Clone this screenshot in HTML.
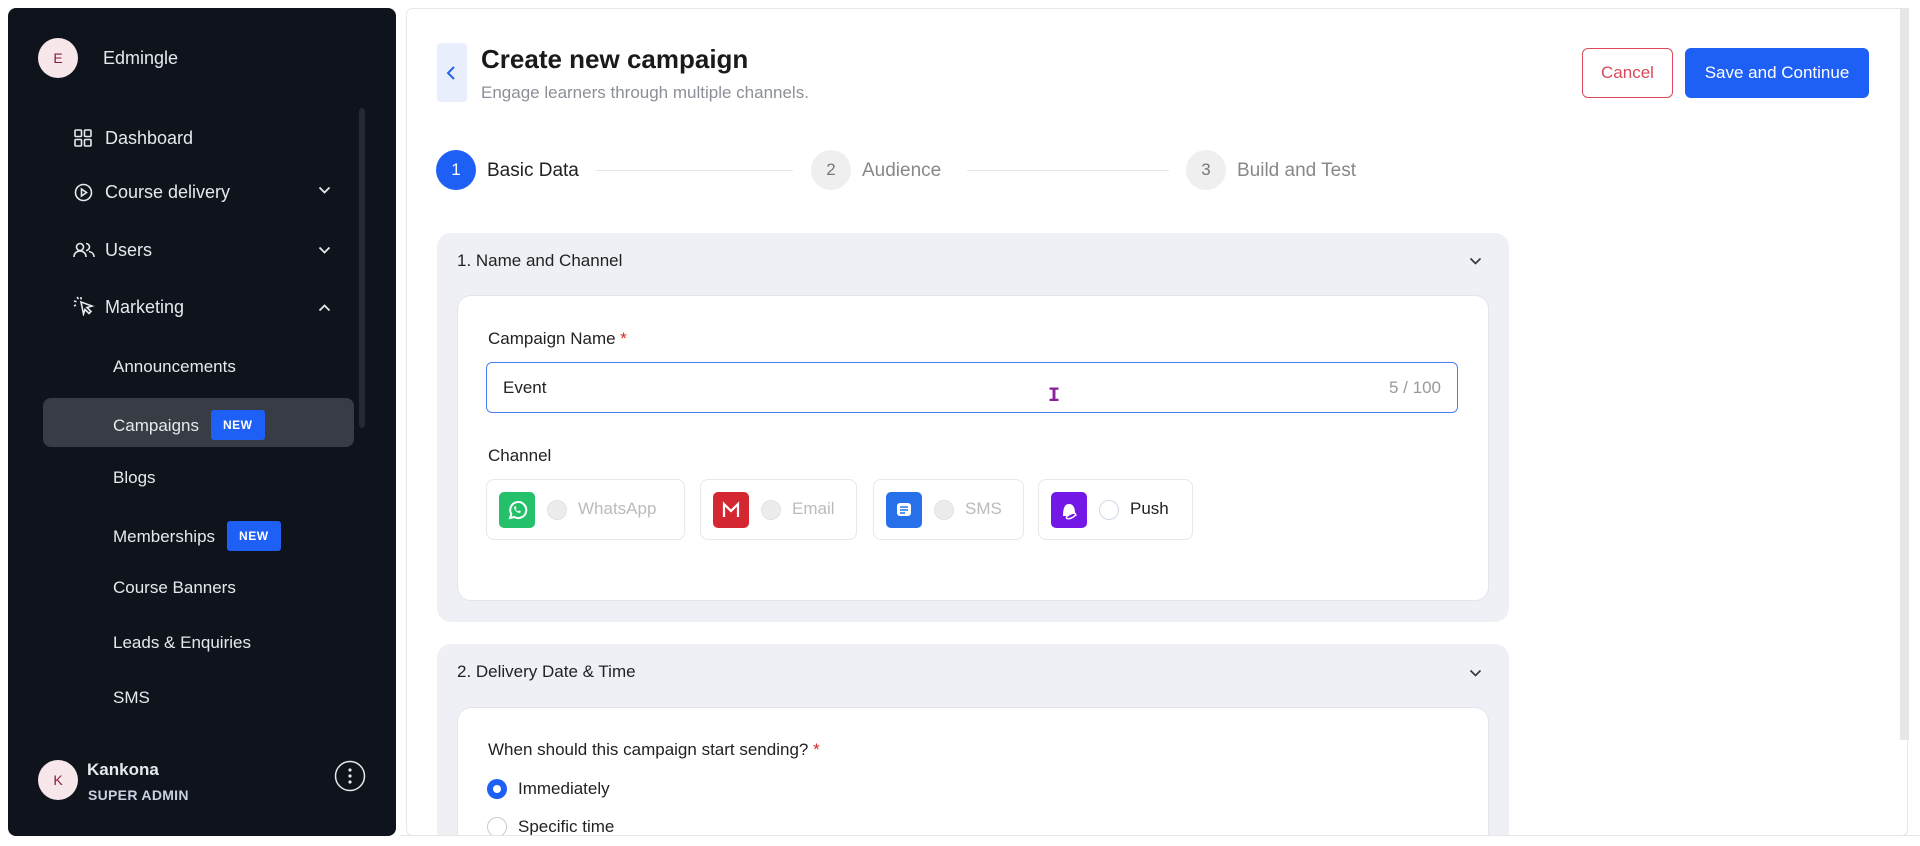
<!DOCTYPE html>
<html><head><meta charset="utf-8"><style>
*{box-sizing:border-box;margin:0;padding:0}
html,body{width:1920px;height:846px;overflow:hidden}
body{background:#fff;font-family:"Liberation Sans",sans-serif;position:relative}
.a{position:absolute}
.sb{left:8px;top:8px;width:388px;height:828px;background:#0f141c;border-radius:8px}
.nav{color:#e6e8ec;font-size:18px;position:absolute;line-height:22px}
.sub{color:#e6e8ec;font-size:17px;position:absolute;left:113px;line-height:22px}
.new{display:inline-block;background:#1e5ff5;color:#fff;font-size:12px;font-weight:bold;padding:4px 12px;border-radius:3px;margin-left:12px;vertical-align:2px;letter-spacing:.5px}
.av{border-radius:50%;background:#f7e6ea;color:#8a1e3c;font-size:14px;text-align:center}
.main{left:406px;top:8px;width:1502px;height:828px;border:1px solid #e6e9e1;border-radius:6px;background:#fff}
.step{border-radius:50%;width:40px;height:40px;text-align:center;line-height:40px;font-size:17px}
.card{background:#eef0f5;border-radius:14px}
.inner{background:#fff;border:1px solid #e2e5ea;border-radius:14px}
.ch{position:absolute;top:479px;height:61px;border:1px solid #e6e8ec;border-radius:8px;background:#fff}
.ic{position:absolute;left:12px;top:12px;width:36px;height:36px;border-radius:5px}
.rd{position:absolute;left:60px;top:20px;width:20px;height:20px;border-radius:50%;background:#ececec;border:1px solid #e2e2e2}
.cl{position:absolute;left:91px;top:19px;font-size:17px;color:#bbb}
</style></head><body>
<div class="a sb"></div>
<div class="a av" style="left:38px;top:38px;width:40px;height:40px;line-height:40px">E</div>
<div class="nav" style="left:103px;top:47px;font-size:18px">Edmingle</div>
<div class="a" style="left:359px;top:108px;width:6px;height:320px;background:#262b33;border-radius:3px"></div>
<svg class="a" style="left:74px;top:129px" width="18" height="18" viewBox="0 0 18 18" fill="none" stroke="#e6e8ec" stroke-width="1.6"><rect x="1" y="1" width="6.5" height="6.5" rx="1"/><rect x="10.5" y="1" width="6.5" height="6.5" rx="1"/><rect x="1" y="10.5" width="6.5" height="6.5" rx="1"/><rect x="10.5" y="10.5" width="6.5" height="6.5" rx="1"/></svg>
<div class="nav" style="left:105px;top:127px">Dashboard</div>
<svg class="a" style="left:74px;top:183px" width="19" height="19" viewBox="0 0 19 19" fill="none" stroke="#e6e8ec" stroke-width="1.6"><circle cx="9.5" cy="9.5" r="8"/><path d="M7.5 6l5 3.5-5 3.5z"/></svg>
<div class="nav" style="left:105px;top:181px">Course delivery</div>
<svg class="a" style="left:73px;top:242px" width="22" height="16" viewBox="0 0 22 16" fill="none" stroke="#e6e8ec" stroke-width="1.6"><circle cx="7" cy="5" r="3.5"/><path d="M1 15c0-4 3-6 6-6s6 2 6 6"/><path d="M13 1.5a3.5 3.5 0 010 7M16 9.5c3 .5 5 2.5 5 5.5"/></svg>
<div class="nav" style="left:105px;top:239px">Users</div>
<svg class="a" style="left:73px;top:296px" width="22" height="20" viewBox="0 0 22 20" fill="none" stroke="#e6e8ec" stroke-width="1.6"><path d="M8 6l11 4-5 1.5 4 4-2 2-4-4L10.5 18z"/><path d="M4 1l1.5 2M1 5l2.5.8M1 10l2-1M8 1v2.5"/></svg>
<div class="nav" style="left:105px;top:296px">Marketing</div>
<svg class="a" style="left:318px;top:186px" width="13" height="8" viewBox="0 0 13 8" fill="none" stroke="#e6e8ec" stroke-width="1.8"><path d="M1.5 1.5l5 5 5-5"/></svg>
<svg class="a" style="left:318px;top:246px" width="13" height="8" viewBox="0 0 13 8" fill="none" stroke="#e6e8ec" stroke-width="1.8"><path d="M1.5 1.5l5 5 5-5"/></svg>
<svg class="a" style="left:318px;top:304px" width="13" height="8" viewBox="0 0 13 8" fill="none" stroke="#e6e8ec" stroke-width="1.8"><path d="M1.5 6.5l5-5 5 5"/></svg>
<div class="sub" style="top:356px">Announcements</div>
<div class="a" style="left:43px;top:398px;width:311px;height:49px;background:#383c44;border-radius:8px"></div>
<div class="sub" style="top:410px">Campaigns<span class="new">NEW</span></div>
<div class="sub" style="top:467px">Blogs</div>
<div class="sub" style="top:521px">Memberships<span class="new">NEW</span></div>
<div class="sub" style="top:577px">Course Banners</div>
<div class="sub" style="top:632px">Leads &amp; Enquiries</div>
<div class="sub" style="top:687px">SMS</div>
<div class="a av" style="left:38px;top:760px;width:40px;height:40px;line-height:40px">K</div>
<div class="nav" style="left:87px;top:759px;font-weight:bold;font-size:17px">Kankona</div>
<div class="nav" style="left:88px;top:784px;font-weight:bold;font-size:14px;color:#c9d0e0;letter-spacing:.3px">SUPER ADMIN</div>
<svg class="a" style="left:334px;top:760px" width="32" height="32" viewBox="0 0 32 32"><circle cx="16" cy="16" r="14.5" fill="none" stroke="#e6e8ec" stroke-width="1.5"/><circle cx="16" cy="10" r="1.6" fill="#e6e8ec"/><circle cx="16" cy="16" r="1.6" fill="#e6e8ec"/><circle cx="16" cy="22" r="1.6" fill="#e6e8ec"/></svg>

<div class="a main"></div>
<div class="a" style="left:1900px;top:8px;width:9px;height:732px;background:#e6e6e6"></div>
<div class="a" style="left:437px;top:43px;width:30px;height:59px;background:#e8eefc;border-radius:4px"></div>
<svg class="a" style="left:446px;top:65px" width="10" height="16" viewBox="0 0 10 16" fill="none" stroke="#2563eb" stroke-width="2"><path d="M8 2L2 8l6 6"/></svg>
<div class="a" style="left:481px;top:44px;font-size:26px;font-weight:bold;color:#1a1a1a">Create new campaign</div>
<div class="a" style="left:481px;top:83px;font-size:17px;color:#8c8f97">Engage learners through multiple channels.</div>
<div class="a" style="left:1582px;top:48px;width:91px;height:50px;border:1px solid #dc4a5c;border-radius:6px;color:#d94a5a;font-size:17px;text-align:center;line-height:48px">Cancel</div>
<div class="a" style="left:1685px;top:48px;width:184px;height:50px;background:#1e5ff5;border-radius:6px;color:#fff;font-size:17px;text-align:center;line-height:50px">Save and Continue</div>

<div class="a step" style="left:436px;top:150px;background:#1e5ff5;color:#fff">1</div>
<div class="a" style="left:487px;top:160px;font-size:19px;color:#222">Basic Data</div>
<div class="a" style="left:596px;top:170px;width:197px;height:1px;background:#e6e6e6"></div>
<div class="a step" style="left:811px;top:150px;background:#efefef;color:#777">2</div>
<div class="a" style="left:862px;top:160px;font-size:19px;color:#888">Audience</div>
<div class="a" style="left:967px;top:170px;width:202px;height:1px;background:#e6e6e6"></div>
<div class="a step" style="left:1186px;top:150px;background:#efefef;color:#777">3</div>
<div class="a" style="left:1237px;top:160px;font-size:19px;color:#888">Build and Test</div>

<div class="a card" style="left:437px;top:233px;width:1072px;height:389px"></div>
<div class="a" style="left:457px;top:251px;font-size:17px;color:#222">1. Name and Channel</div>
<svg class="a" style="left:1469px;top:257px" width="13" height="8" viewBox="0 0 13 8" fill="none" stroke="#333" stroke-width="1.6"><path d="M1.5 1.5l5 5 5-5"/></svg>
<div class="a inner" style="left:457px;top:295px;width:1032px;height:306px"></div>
<div class="a" style="left:488px;top:329px;font-size:17px;color:#222">Campaign Name <span style="color:#dc2626">*</span></div>
<div class="a" style="left:486px;top:362px;width:972px;height:51px;border:1.5px solid #4a7ef7;border-radius:6px"></div>
<div class="a" style="left:503px;top:378px;font-size:17px;color:#222">Event</div>
<div class="a" style="left:1389px;top:378px;font-size:17px;color:#999">5 / 100</div>
<div class="a" style="left:1048px;top:385px;font-size:20px;color:#8a1f9a;font-weight:bold;font-family:'Liberation Mono',monospace">I</div>
<div class="a" style="left:488px;top:446px;font-size:17px;color:#222">Channel</div>

<div class="ch" style="left:486px;width:199px"><div class="ic" style="background:#25c06a"><svg width="36" height="36" viewBox="0 0 36 36" fill="none" stroke="#fff" stroke-width="2"><path d="M11 26l1.3-4a8 8 0 113 3z"/><path d="M15 15c0 3 3 6 6 6l1-1.5-2-1-1 1c-1-.5-2-1.5-2.5-2.5l1-1-1-2z" fill="#fff" stroke="none"/></svg></div><div class="rd"></div><div class="cl">WhatsApp</div></div>
<div class="ch" style="left:700px;width:157px"><div class="ic" style="background:#d42732"><svg width="36" height="36" viewBox="0 0 36 36" fill="none" stroke="#fff" stroke-width="2.2"><path d="M11 25V12l7 7 7-7v13"/></svg></div><div class="rd"></div><div class="cl">Email</div></div>
<div class="ch" style="left:873px;width:151px"><div class="ic" style="background:#2670ea"><svg width="36" height="36" viewBox="0 0 36 36"><rect x="11" y="11" width="14" height="13" rx="3" fill="#fff"/><path d="M14 15h8M14 18h8M14 21h5" stroke="#2670ea" stroke-width="1.5"/></svg></div><div class="rd"></div><div class="cl">SMS</div></div>
<div class="ch" style="left:1038px;width:155px"><div class="ic" style="background:#7418e8"><svg width="36" height="36" viewBox="0 0 36 36"><path d="M12 24c0-6 1-12 6-12s6 5 6 9l2 3z" fill="#fff"/><ellipse cx="20" cy="24" rx="5" ry="2" fill="#7418e8" stroke="#fff" stroke-width="1.4" transform="rotate(-25 20 24)"/></svg></div><div class="rd" style="background:#fff;border-color:#cfd8e6"></div><div class="cl" style="color:#222">Push</div></div>

<div class="a card" style="left:437px;top:644px;width:1072px;height:191px;border-radius:14px 14px 0 0"></div>
<div class="a" style="left:457px;top:662px;font-size:17px;color:#222">2. Delivery Date &amp; Time</div>
<svg class="a" style="left:1469px;top:669px" width="13" height="8" viewBox="0 0 13 8" fill="none" stroke="#333" stroke-width="1.6"><path d="M1.5 1.5l5 5 5-5"/></svg>
<div class="a inner" style="left:457px;top:707px;width:1032px;height:128px;border-bottom:none;border-radius:14px 14px 0 0"></div>
<div class="a" style="left:488px;top:740px;font-size:17px;color:#222">When should this campaign start sending? <span style="color:#dc2626">*</span></div>
<div class="a" style="left:487px;top:779px;width:20px;height:20px;border-radius:50%;background:#1e5ff5"><div style="margin:6px;width:8px;height:8px;border-radius:50%;background:#fff"></div></div>
<div class="a" style="left:518px;top:779px;font-size:17px;color:#222">Immediately</div>
<div class="a" style="left:487px;top:817px;width:20px;height:20px;border-radius:50%;border:1px solid #ccc;background:#fff"></div>
<div class="a" style="left:518px;top:817px;font-size:17px;color:#222">Specific time</div>
<div class="a" style="left:400px;top:835px;width:1520px;height:11px;background:#fff;border-top:1px solid #e6e9e1"></div>
</body></html>
